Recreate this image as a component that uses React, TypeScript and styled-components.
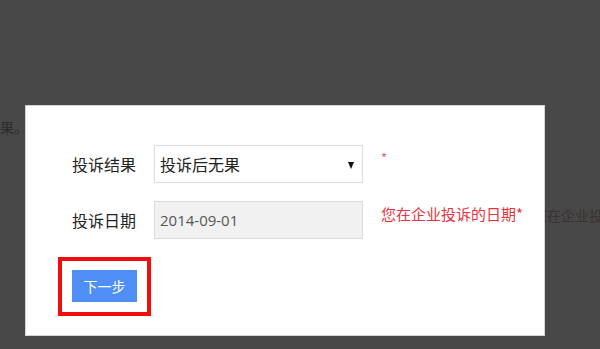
import React from 'react';
import styled, { createGlobalStyle } from 'styled-components';

const GlobalStyle = createGlobalStyle`
  html, body {
    margin: 0;
    padding: 0;
    background: #484848;
  }
  * {
    box-sizing: border-box;
  }
`;

const Screen = styled.div`
  position: relative;
  width: 600px;
  height: 349px;
  overflow: hidden;
  background: #484848;
  font-family: 'Open Sans', 'Noto Sans CJK SC', sans-serif;
`;

const BehindPage = styled.div`
  display: flex;
  flex-direction: column;
  padding-top: 117px;
  color: #2c2c2c;
  font-family: 'Noto Sans CJK SC', sans-serif;
  font-size: 14px;
  line-height: 20px;
  white-space: nowrap;
`;

const BehindLine = styled.div<{ $indent?: number; $gap?: number; $tone?: string }>`
  margin-top: ${({ $gap }) => $gap ?? 0}px;
  padding-left: ${({ $indent }) => $indent ?? 0}px;
  color: ${({ $tone }) => $tone ?? '#2c2c2c'};
`;

const Dialog = styled.div`
  position: absolute;
  left: 25px;
  top: 105px;
  width: 520px;
  height: 231px;
  background: #fff;
  border: 1px solid #d4d4d4;
  padding: 39px 0 0 46px;
  display: flex;
  flex-direction: column;
  gap: 18px;
`;

const Row = styled.div`
  display: flex;
  align-items: flex-start;
`;

const Label = styled.label`
  width: 82px;
  height: 38px;
  display: flex;
  align-items: center;
  font-family: 'Noto Sans CJK SC', sans-serif;
  font-size: 16px;
  color: #222;
`;

const Field = styled.div<{ $disabled?: boolean }>`
  position: relative;
  width: 209px;
  height: 38px;
  border: 1px solid #dcdcdc;
  background: ${({ $disabled }) => ($disabled ? '#f1f1f1' : '#fff')};
  color: ${({ $disabled }) => ($disabled ? '#555' : '#222')};
  display: flex;
  align-items: center;
  padding: 0 0 0 5px;
  font-family: ${({ $disabled }) =>
    $disabled ? "'Open Sans', sans-serif" : "'Noto Sans CJK SC', sans-serif"};
  font-size: ${({ $disabled }) => ($disabled ? '15px' : '16px')};
`;

const Caret = styled.span`
  position: absolute;
  right: 8px;
  top: 16px;
  width: 0;
  height: 0;
  border-left: 3.5px solid transparent;
  border-right: 3.5px solid transparent;
  border-top: 7px solid #111;
`;

const Note = styled.span<{ $small?: boolean }>`
  margin: 3px 0 0 18px;
  color: ${({ $small }) => ($small ? '#ee5a6e' : '#e8333d')};
  font-family: 'Noto Sans CJK SC', sans-serif;
  font-size: ${({ $small }) => ($small ? '13px' : '15px')};
  line-height: 20px;
  white-space: nowrap;
`;

const Highlight = styled.div`
  margin: 0 0 0 -14px;
  width: 93px;
  border: 4px solid #f20d0d;
  padding: 9px 10px 10px;
  display: flex;
`;

const NextButton = styled.button`
  width: 65px;
  height: 32px;
  border: none;
  background: #4f8ff5;
  color: #fff;
  font-family: 'Noto Sans CJK SC', sans-serif;
  font-size: 14px;
  padding: 0;
`;

export default function App() {
  return (
    <>
      <GlobalStyle />
      <Screen>
        <BehindPage>
          <BehindLine>果。</BehindLine>
          <BehindLine $gap={68} $indent={533} $tone="#3a3131">
            您在企业投诉的日期*
          </BehindLine>
        </BehindPage>
        <Dialog>
          <Row>
            <Label>投诉结果</Label>
            <Field>
              投诉后无果
              <Caret />
            </Field>
            <Note $small>*</Note>
          </Row>
          <Row>
            <Label>投诉日期</Label>
            <Field $disabled>2014-09-01</Field>
            <Note>您在企业投诉的日期*</Note>
          </Row>
          <Highlight>
            <NextButton>下一步</NextButton>
          </Highlight>
        </Dialog>
      </Screen>
    </>
  );
}
